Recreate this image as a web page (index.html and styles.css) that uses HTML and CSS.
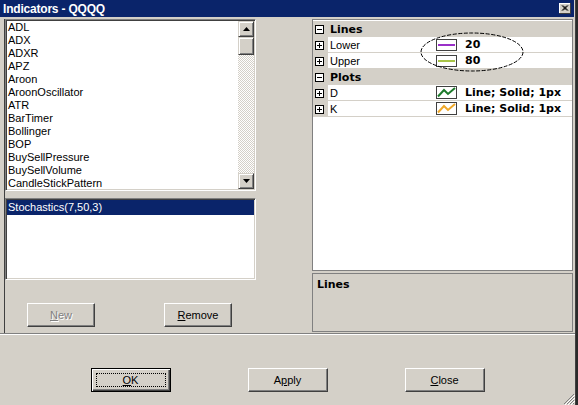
FILE: index.html
```html
<!DOCTYPE html>
<html>
<head>
<meta charset="utf-8">
<title>Indicators - QQQQ</title>
<link rel="stylesheet" href="styles.css">
</head>
<body>
<div class="window">
  <div class="titlebar">
    <span class="title">Indicators - QQQQ</span>
    <span class="close-btn"><svg width="12" height="11" viewBox="0 0 12 11"><path d="M3 2.5 L8 7.5 M4 2.5 L9 7.5 M8 2.5 L3 7.5 M9 2.5 L4 7.5" stroke="#000" stroke-width="1"/></svg></span>
  </div>
  <div class="main">
    <div class="left">
      <div class="listbox list-ind">
        <ul class="items">
          <li>ADL</li><li>ADX</li><li>ADXR</li><li>APZ</li><li>Aroon</li><li>AroonOscillator</li><li>ATR</li><li>BarTimer</li><li>Bollinger</li><li>BOP</li><li>BuySellPressure</li><li>BuySellVolume</li><li>CandleStickPattern</li>
        </ul>
        <div class="vscroll">
          <div class="sb-btn"><svg width="7" height="4" viewBox="0 0 7 4"><path d="M3.5 0 L7 4 L0 4 Z" fill="#000"/></svg></div>
          <div class="sb-thumb"></div>
          <div class="sb-track"></div>
          <div class="sb-btn"><svg width="7" height="4" viewBox="0 0 7 4"><path d="M0 0 L7 0 L3.5 4 Z" fill="#000"/></svg></div>
        </div>
      </div>
      <div class="listbox list-sel">
        <div class="sel-item">Stochastics(7,50,3)</div>
      </div>
      <div class="left-buttons">
        <button class="btn btn-small btn-disabled"><u>N</u>ew</button>
        <button class="btn btn-small"><u>R</u>emove</button>
      </div>
    </div>
    <div class="right">
      <div class="propgrid">
        <div class="row cat">
          <span class="gutter"><svg class="exp" width="9" height="9" viewBox="0 0 9 9"><rect x="0.5" y="0.5" width="8" height="8" fill="#fff" stroke="#000"/><path d="M2 4.5 H7" stroke="#000"/></svg></span>
          <span class="cat-name">Lines</span>
        </div>
        <div class="row item">
          <span class="gutter"><svg class="exp" width="9" height="9" viewBox="0 0 9 9"><rect x="0.5" y="0.5" width="8" height="8" fill="#fff" stroke="#000"/><path d="M2 4.5 H7 M4.5 2 V7" stroke="#000"/></svg></span>
          <span class="name">Lower</span>
          <span class="value"><svg class="swatch" width="21" height="12" viewBox="0 0 21 12"><rect x="0.5" y="0.5" width="20" height="11" fill="#fff" stroke="#404040"/><path d="M2 6 H19" stroke="#9a30c8" stroke-width="2"/></svg><b>20</b></span>
        </div>
        <div class="row item">
          <span class="gutter"><svg class="exp" width="9" height="9" viewBox="0 0 9 9"><rect x="0.5" y="0.5" width="8" height="8" fill="#fff" stroke="#000"/><path d="M2 4.5 H7 M4.5 2 V7" stroke="#000"/></svg></span>
          <span class="name">Upper</span>
          <span class="value"><svg class="swatch" width="21" height="12" viewBox="0 0 21 12"><rect x="0.5" y="0.5" width="20" height="11" fill="#fff" stroke="#404040"/><path d="M2 6 H19" stroke="#a8c448" stroke-width="2"/></svg><b>80</b></span>
        </div>
        <div class="row cat">
          <span class="gutter"><svg class="exp" width="9" height="9" viewBox="0 0 9 9"><rect x="0.5" y="0.5" width="8" height="8" fill="#fff" stroke="#000"/><path d="M2 4.5 H7" stroke="#000"/></svg></span>
          <span class="cat-name">Plots</span>
        </div>
        <div class="row item">
          <span class="gutter"><svg class="exp" width="9" height="9" viewBox="0 0 9 9"><rect x="0.5" y="0.5" width="8" height="8" fill="#fff" stroke="#000"/><path d="M2 4.5 H7 M4.5 2 V7" stroke="#000"/></svg></span>
          <span class="name">D</span>
          <span class="value"><svg class="swatch" width="21" height="13" viewBox="0 0 21 13"><rect x="0.5" y="0.5" width="20" height="12" fill="#fff" stroke="#404040"/><path d="M2 10.5 L8 4 L12 8 L19 2" fill="none" stroke="#1d7a2c" stroke-width="2"/></svg><b>Line; Solid; 1px</b></span>
        </div>
        <div class="row item">
          <span class="gutter"><svg class="exp" width="9" height="9" viewBox="0 0 9 9"><rect x="0.5" y="0.5" width="8" height="8" fill="#fff" stroke="#000"/><path d="M2 4.5 H7 M4.5 2 V7" stroke="#000"/></svg></span>
          <span class="name">K</span>
          <span class="value"><svg class="swatch" width="21" height="13" viewBox="0 0 21 13"><rect x="0.5" y="0.5" width="20" height="12" fill="#fff" stroke="#404040"/><path d="M2 10.5 L8 4 L12 8 L19 2" fill="none" stroke="#f0a828" stroke-width="2"/></svg><b>Line; Solid; 1px</b></span>
        </div>
        <svg class="ellipse" width="104" height="40" viewBox="0 0 104 40"><ellipse cx="52" cy="20" rx="51" ry="19" fill="none" stroke="#000" stroke-width="1" stroke-dasharray="4 1.5"/></svg>
      </div>
      <div class="desc"><b>Lines</b></div>
    </div>
  </div>
  <div class="separator"></div>
  <div class="footer">
    <button class="btn btn-default"><span class="focus"><u>O</u>K</span></button>
    <button class="btn">A<u>p</u>ply</button>
    <button class="btn"><u>C</u>lose</button>
  </div>
  <svg class="grip" width="12" height="12" viewBox="0 0 12 12"><path d="M11 1 L1 11 M11 4 L4 11 M11 7 L7 11 M11 10 L10 11" stroke="#808080"/><path d="M12 2 L2 12 M12 5 L5 12 M12 8 L8 12" stroke="#fff"/></svg>
</div>
</body>
</html>
```
FILE: styles.css
```css
* { box-sizing: border-box; }
html, body { margin: 0; padding: 0; }
body {
  background: #2a2a2a;
  width: 578px;
  height: 405px;
  overflow: hidden;
  font-family: "Liberation Sans", Arial, sans-serif;
  font-size: 11px;
  color: #000;
}
.window {
  position: relative;
  width: 576px;
  height: 405px;
  background: #d4d0c8;
  border-right: 1px solid #404040;
}
.titlebar {
  height: 17px;
  background: #0a246a;
  display: flex;
  align-items: center;
  justify-content: space-between;
  padding: 0 3px 0 3px;
  margin-right: 1px;
}
.title {
  color: #fff;
  font-weight: bold;
  font-size: 12px;
  letter-spacing: -0.2px;
}
.close-btn {
  width: 12px;
  height: 11px;
  background: #d4d0c8;
  display: flex;
  box-shadow: inset -1px -1px #404040, inset 1px 1px #fff;
}
.main {
  display: flex;
  height: 316px;
  padding-top: 2px;
}
.left {
  margin-left: 4px;
  width: 254px;
  border-left: 1px solid #404040;
  display: flex;
  flex-direction: column;
}
.listbox {
  background: #fff;
  border: 1px solid;
  border-color: #808080 #fff #fff #808080;
  box-shadow: inset 1px 1px #404040, inset -1px -1px #d4d0c8;
}
.list-ind {
  width: 251px;
  height: 172px;
  display: flex;
  padding: 1px;
}
.items {
  flex: 1;
  list-style: none;
  margin: 0;
  padding: 0 0 0 1px;
}
.items li {
  height: 13px;
  line-height: 13px;
  white-space: nowrap;
}
.vscroll {
  width: 16px;
  display: flex;
  flex-direction: column;
}
.sb-btn, .sb-thumb {
  width: 16px;
  height: 16px;
  background: #d4d0c8;
  border: 1px solid;
  border-color: #d4d0c8 #404040 #404040 #d4d0c8;
  box-shadow: inset 1px 1px #fff, inset -1px -1px #808080;
  display: flex;
  align-items: center;
  justify-content: center;
}
.sb-thumb { height: 18px; }
.sb-track {
  flex: 1;
  background: repeating-conic-gradient(#d4d0c8 0 25%, #fff 0 50%) 0 0 / 2px 2px;
}
.list-sel {
  width: 251px;
  height: 82px;
  margin-top: 7px;
  padding: 1px;
}
.sel-item {
  background: #0a246a;
  color: #fff;
  height: 15px;
  line-height: 15px;
  padding-left: 1px;
}
.left-buttons {
  display: flex;
  margin-top: 23px;
  padding-left: 22px;
  gap: 69px;
}
.btn {
  width: 80px;
  height: 24px;
  background: #d4d0c8;
  border: 1px solid;
  border-color: #fff #404040 #404040 #fff;
  box-shadow: inset -1px -1px #808080;
  font-family: "Liberation Sans", Arial, sans-serif;
  font-size: 11px;
  color: #000;
  padding: 0;
  position: relative;
}
.btn-small { width: 68px; }
.btn-disabled {
  color: #808080;
  text-shadow: 1px 1px #fff;
}
.btn-default {
  border: 1px solid #000;
  box-shadow: inset 1px 1px #fff, inset -1px -1px #404040, inset -2px -2px #808080;
}
.focus {
  position: absolute;
  left: 4px;
  top: 4px;
  right: 4px;
  bottom: 4px;
  border: 1px dotted #000;
  display: flex;
  align-items: center;
  justify-content: center;
}
.right {
  margin-left: 54px;
  width: 261px;
  display: flex;
  flex-direction: column;
}
.propgrid {
  position: relative;
  height: 252px;
  background: #fff;
  border: 1px solid #808080;
  padding-top: 1px;
}
.row {
  display: flex;
  height: 16px;
  align-items: center;
}
.gutter {
  width: 15px;
  height: 16px;
  background: #d4d0c8;
  display: flex;
  align-items: center;
  padding-left: 2px;
}
.cat { background: #d4d0c8; }
.cat-name {
  padding-left: 2px;
  font-family: "DejaVu Sans", Verdana, sans-serif;
  font-weight: bold;
  font-size: 11px;
}
.item { border-bottom: 1px solid #d4d0c8; }
.item .gutter { height: 16px; margin-bottom: -1px; }
.name {
  width: 104px;
  padding-left: 2px;
}
.value {
  display: flex;
  align-items: center;
  padding-left: 4px;
  gap: 8px;
}
.value b {
  font-family: "DejaVu Sans", Verdana, sans-serif;
  font-weight: bold;
  font-size: 11px;
}
.ellipse {
  position: absolute;
  left: 107px;
  top: 12px;
}
.desc {
  margin-top: 2px;
  height: 59px;
  border: 1px solid #808080;
  padding: 4px 4px;
}
.desc b {
  font-family: "DejaVu Sans", Verdana, sans-serif;
  font-size: 11px;
}
.separator {
  height: 2px;
  border-top: 1px solid #808080;
  border-bottom: 1px solid #fff;
}
.footer {
  display: flex;
  justify-content: center;
  gap: 77px;
  padding-top: 33px;
}
.grip {
  position: absolute;
  right: 0;
  bottom: 0;
}
```
